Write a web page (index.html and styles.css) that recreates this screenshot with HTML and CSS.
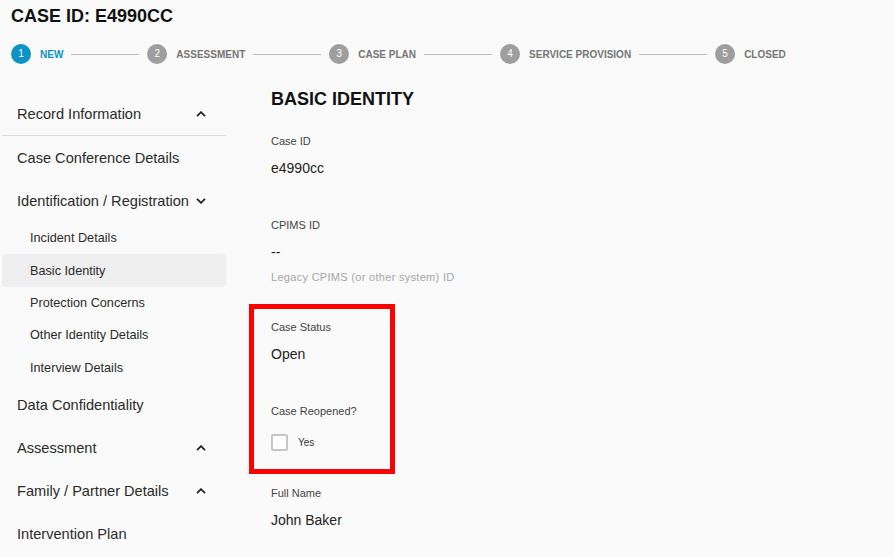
FILE: index.html
```html
<!DOCTYPE html>
<html lang="en">
<head>
<meta charset="utf-8">
<title>Case E4990CC</title>
<link rel="stylesheet" href="styles.css">
</head>
<body>
<header class="page-header">
  <h1 class="case-title">CASE ID: E4990CC</h1>
  <ol class="stepper">
    <li class="step active"><span class="step-num">1</span><span class="step-label">NEW</span></li>
    <li class="step-line"></li>
    <li class="step"><span class="step-num">2</span><span class="step-label">ASSESSMENT</span></li>
    <li class="step-line"></li>
    <li class="step"><span class="step-num">3</span><span class="step-label">CASE PLAN</span></li>
    <li class="step-line"></li>
    <li class="step"><span class="step-num">4</span><span class="step-label">SERVICE PROVISION</span></li>
    <li class="step-line"></li>
    <li class="step"><span class="step-num">5</span><span class="step-label">CLOSED</span></li>
  </ol>
</header>
<div class="layout">
  <nav class="sidebar">
    <div class="nav-item"><span>Record Information</span><svg class="chev" viewBox="0 0 10 6"><polyline points="1,5.2 5,1.2 9,5.2"/></svg></div>
    <div class="nav-divider"></div>
    <div class="nav-item"><span>Case Conference Details</span></div>
    <div class="nav-item"><span>Identification / Registration</span><svg class="chev" viewBox="0 0 10 6"><polyline points="1,0.8 5,4.8 9,0.8"/></svg></div>
    <div class="nav-sub">Incident Details</div>
    <div class="nav-sub selected">Basic Identity</div>
    <div class="nav-sub">Protection Concerns</div>
    <div class="nav-sub">Other Identity Details</div>
    <div class="nav-sub">Interview Details</div>
    <div class="nav-item"><span>Data Confidentiality</span></div>
    <div class="nav-item"><span>Assessment</span><svg class="chev" viewBox="0 0 10 6"><polyline points="1,5.2 5,1.2 9,5.2"/></svg></div>
    <div class="nav-item"><span>Family / Partner Details</span><svg class="chev" viewBox="0 0 10 6"><polyline points="1,5.2 5,1.2 9,5.2"/></svg></div>
    <div class="nav-item"><span>Intervention Plan</span></div>
  </nav>
  <main class="content">
    <h2 class="section-title">BASIC IDENTITY</h2>
    <div class="field">
      <div class="field-label">Case ID</div>
      <div class="field-value">e4990cc</div>
    </div>
    <div class="field">
      <div class="field-label">CPIMS ID</div>
      <div class="field-value">--</div>
      <div class="field-help">Legacy CPIMS (or other system) ID</div>
    </div>
    <div class="highlight-box">
      <div class="field">
        <div class="field-label">Case Status</div>
        <div class="field-value">Open</div>
      </div>
      <div class="field last">
        <div class="field-label">Case Reopened?</div>
        <label class="check"><span class="check-box"></span><span class="check-text">Yes</span></label>
      </div>
    </div>
    <div class="field after-box">
      <div class="field-label">Full Name</div>
      <div class="field-value">John Baker</div>
    </div>
  </main>
</div>
</body>
</html>
```

FILE: styles.css
```css
* { box-sizing: border-box; }
html, body { margin: 0; padding: 0; }
body {
  background: #fafafa;
  font-family: "Liberation Sans", Arial, sans-serif;
  color: #222;
  width: 894px;
  height: 557px;
  overflow: hidden;
}

.page-header { padding: 5px 0 0 11px; }
.case-title {
  margin: 0;
  font-size: 18px;
  line-height: 22px;
  font-weight: 700;
  color: #111;
}

.stepper {
  list-style: none;
  margin: 17px 0 0 0;
  padding: 0;
  display: flex;
  align-items: center;
  height: 20px;
}
.step { display: flex; align-items: center; gap: 9px; }
.step-num {
  width: 20px;
  height: 20px;
  border-radius: 50%;
  background: #9e9e9e;
  color: #fff;
  font-size: 10px;
  line-height: 20px;
  text-align: center;
}
.step-label {
  font-size: 10px;
  font-weight: 700;
  color: #757575;
}
.step.active .step-num { background: #0a93c3; }
.step.active .step-label { color: #0a93c3; }
.step-line {
  width: 68px;
  height: 1px;
  background: #bdbdbd;
  margin: 0 8px;
}

.layout {
  display: grid;
  grid-template-columns: 224px 1fr;
  column-gap: 23px;
  padding-left: 2px;
}

.sidebar { padding-top: 28px; }
.nav-item {
  height: 43px;
  display: flex;
  align-items: center;
  justify-content: space-between;
  gap: 6px;
  padding: 0 20px 0 15px;
  font-size: 14.6px;
  color: #2a2a2a;
}
.nav-item span { white-space: nowrap; }
.chev {
  width: 10px;
  height: 6px;
  flex: none;
  fill: none;
  stroke: #222;
  stroke-width: 1.8;
}
.nav-divider { height: 1px; background: #dcdcdc; }
.nav-sub {
  height: 32.4px;
  display: flex;
  align-items: center;
  padding-left: 28px;
  font-size: 12.7px;
  color: #2a2a2a;
  border-radius: 4px;
}
.nav-sub.selected { background: #efefef; }

.content { padding-top: 24px; }
.section-title {
  margin: 0 0 24px 22px;
  font-size: 18px;
  line-height: 22px;
  font-weight: 700;
  color: #111;
}
.field { padding-left: 22px; margin-bottom: 41px; }
.field-label {
  font-size: 11px;
  line-height: 14px;
  color: #444;
}
.field-value {
  margin-top: 11px;
  font-size: 14px;
  line-height: 18px;
  color: #222;
}
.field-help {
  margin-top: 9px;
  font-size: 11px;
  line-height: 14px;
  letter-spacing: 0.3px;
  color: #a6a6a6;
}
.field:nth-of-type(2) { margin-bottom: 20px; }

.highlight-box {
  width: 146px;
  border: 5px solid #ff0000;
  padding: 11px 0 18px 0;
}
.highlight-box .field { padding-left: 17px; }
.highlight-box .field.last { margin-bottom: 0; }

.check {
  display: flex;
  align-items: center;
  gap: 10px;
  margin-top: 16px;
}
.check-box {
  width: 17px;
  height: 17px;
  border: 2px solid #c6c6c6;
  border-radius: 2px;
  background: #fff;
}
.check-text { font-size: 10px; color: #333; }

.field.after-box { margin-top: 12px; }
```
